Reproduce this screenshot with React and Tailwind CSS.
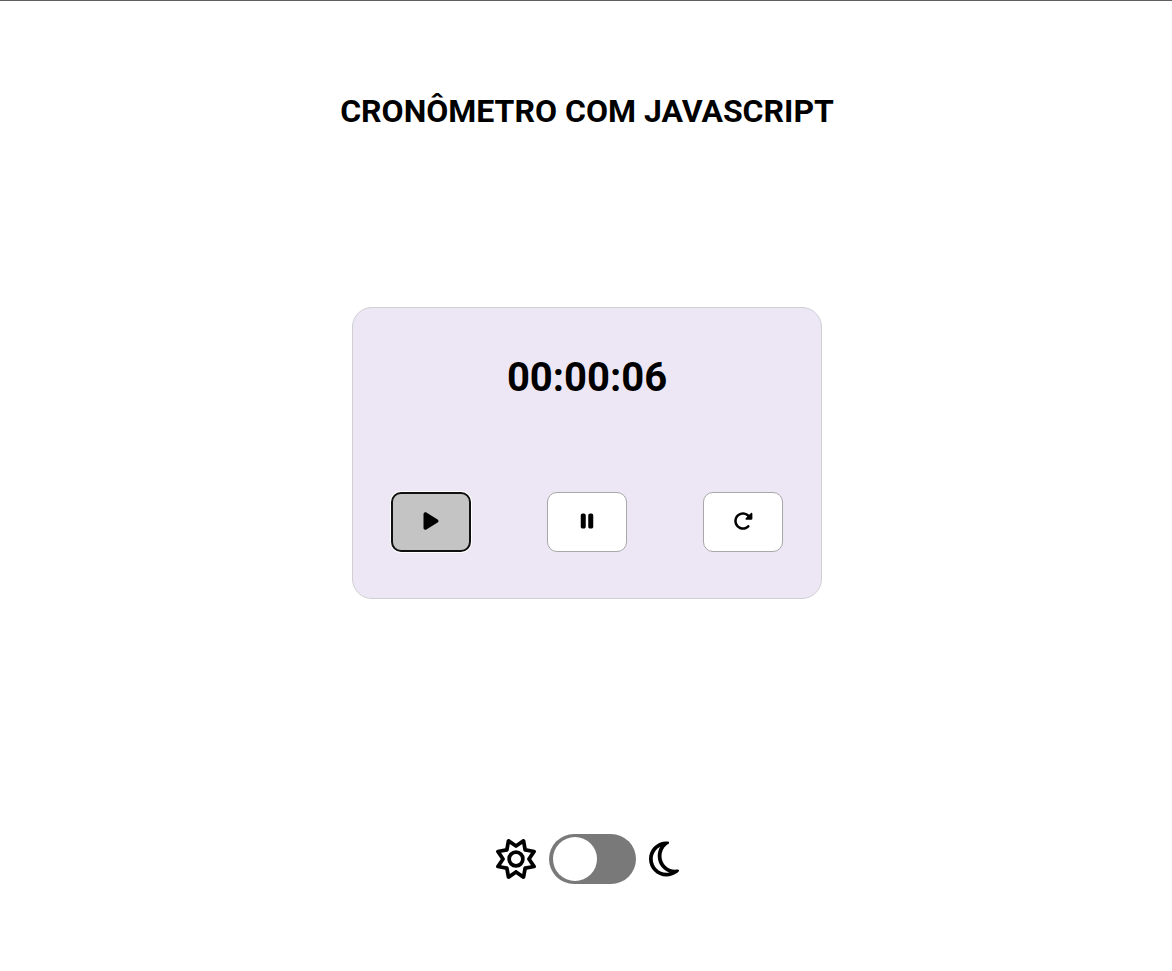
import { useEffect, useState } from "react";
import {
  FaPlay,
  FaPause,
  FaRotateRight,
  FaRegSun,
  FaRegMoon,
} from "react-icons/fa6";

const pad = (n) => String(n).padStart(2, "0");

const plain = "border border-[#a8a8a8] bg-white";
const pressed = "border-2 border-[#101010] bg-[#c4c4c4] shadow-[0_0_0_1px_#ffffff]";

function ControlButton({ label, active, onClick, children }) {
  return (
    <button
      type="button"
      aria-label={label}
      onClick={onClick}
      className={`flex h-15 w-20 items-center justify-center rounded-[10px] pb-0.5 text-xl text-black outline-none ${active ? pressed : plain}`}
    >
      {children}
    </button>
  );
}

export default function App() {
  const [seconds, setSeconds] = useState(6);
  const [running, setRunning] = useState(false);
  const [dark, setDark] = useState(false);
  const [active, setActive] = useState("play");

  useEffect(() => {
    if (!running) return undefined;
    const id = setInterval(() => setSeconds((s) => s + 1), 1000);
    return () => clearInterval(id);
  }, [running]);

  const time = [Math.floor(seconds / 3600), Math.floor(seconds / 60) % 60, seconds % 60]
    .map(pad)
    .join(":");

  return (
    <main
      className={`flex min-h-screen flex-col items-center border-t border-[#5f5f63] pt-22 pr-4 pb-20 pl-[18px] font-['Roboto','Liberation_Sans',sans-serif] ${dark ? "bg-[#202020] text-white" : "bg-white text-black"}`}
    >
      <h1 className="text-center text-[32px] leading-11 font-bold">CRONÔMETRO COM JAVASCRIPT</h1>

      <section className="mt-[174px] flex w-full max-w-[470px] flex-col rounded-[20px] border border-[#d0d0d4] bg-[#ede7f5] px-[38px] pt-11 pb-[46px] text-black">
        <p role="timer" className="text-center text-[40px] leading-13 font-bold">
          {time}
        </p>
        <div className="mt-22 flex justify-between">
          <ControlButton
            label="Iniciar"
            active={active === "play"}
            onClick={() => {
              setActive("play");
              setRunning(true);
            }}
          >
            <FaPlay />
          </ControlButton>
          <ControlButton
            label="Pausar"
            active={active === "pause"}
            onClick={() => {
              setActive("pause");
              setRunning(false);
            }}
          >
            <FaPause />
          </ControlButton>
          <ControlButton
            label="Reiniciar"
            active={active === "reset"}
            onClick={() => {
              setActive("reset");
              setRunning(false);
              setSeconds(0);
            }}
          >
            <FaRotateRight />
          </ControlButton>
        </div>
      </section>

      <div className="mt-[235px] flex items-center gap-[13px] text-[40px]">
        <FaRegSun />
        <input
          type="checkbox"
          role="switch"
          aria-label="Modo escuro"
          checked={dark}
          onChange={(e) => setDark(e.target.checked)}
          className="flex h-[50px] w-[87px] cursor-pointer appearance-none items-center rounded-full bg-[#797979] px-1 before:block before:size-11 before:rounded-full before:bg-white before:content-[''] checked:justify-end"
        />
        <FaRegMoon className="w-[30px]" />
      </div>
    </main>
  );
}
